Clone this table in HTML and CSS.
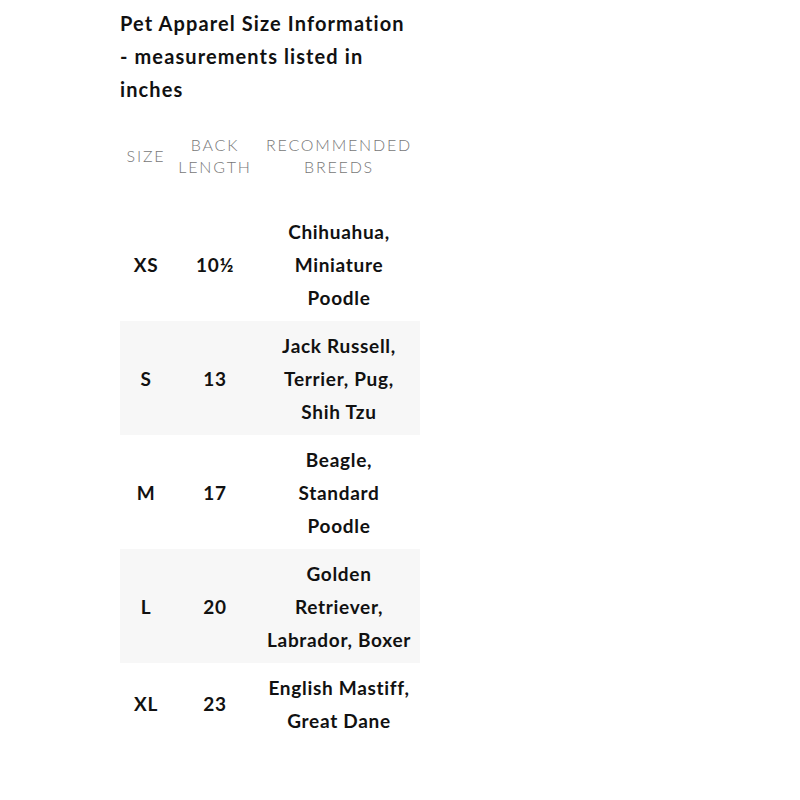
FILE: index.html
```html
<!DOCTYPE html>
<html>
<head>
<meta charset="utf-8">
<link rel="stylesheet" href="styles.css">
</head>
<body>
<div class="sizes">
  <h2 class="title">Pet Apparel Size Information - measurements listed in inches</h2>
  <table class="chart">
    <colgroup><col class="c1"><col class="c2"><col class="c3"></colgroup>
    <thead>
      <tr><th>SIZE</th><th>BACK LENGTH</th><th>RECOMMENDED BREEDS</th></tr>
    </thead>
    <tbody>
      <tr><td>XS</td><td>10½</td><td>Chihuahua, Miniature Poodle</td></tr>
      <tr class="alt"><td>S</td><td>13</td><td>Jack Russell, Terrier, Pug, Shih Tzu</td></tr>
      <tr><td>M</td><td>17</td><td>Beagle, Standard Poodle</td></tr>
      <tr class="alt"><td>L</td><td>20</td><td>Golden Retriever, Labrador, Boxer</td></tr>
      <tr><td>XL</td><td>23</td><td>English Mastiff, Great Dane</td></tr>
    </tbody>
  </table>
</div>
</body>
</html>
```
FILE: styles.css
```css
html, body { margin: 0; padding: 0; background: #fff; }
body { font-family: Lato, "Open Sans", sans-serif; color: #111; }
.sizes { width: 300px; margin-left: 120px; padding-top: 7px; }
.title { margin: 0; max-width: 290px; font-size: 20px; font-weight: 700; line-height: 33px; letter-spacing: 1.1px; color: #111; }
.chart { margin-top: 28px; border-collapse: collapse; table-layout: fixed; width: 300px; }
.c1 { width: 52px; }
.c2 { width: 86px; }
.c3 { width: 162px; }
.chart th { font-weight: 300; font-size: 16px; line-height: 22px; color: #777; letter-spacing: 1.8px; text-align: center; vertical-align: middle; padding: 0 0 29px; }
.chart td { font-size: 19px; font-weight: 700; line-height: 33px; letter-spacing: 0.7px; text-align: center; vertical-align: middle; padding: 7.5px 2px; }
.chart td:last-child { padding: 7.5px 8px; }
.chart tr.alt td { background: #f7f7f7; }
```
